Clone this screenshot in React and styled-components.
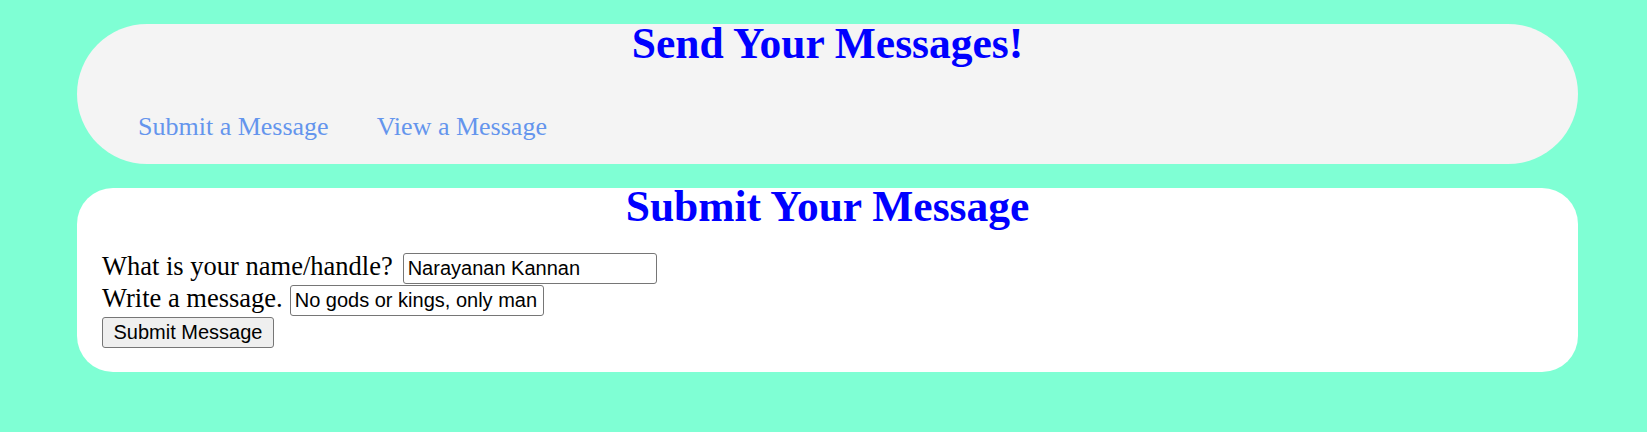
import React from "react"
import styled, { createGlobalStyle } from "styled-components"

const GlobalStyle = createGlobalStyle`
    html, body {
        margin: 0;
        padding: 0;
        background: #7fffd4;
    }
    body {
        font-family: "Liberation Serif", "Times New Roman", serif;
        color: #000;
    }
`;

const Page = styled.div`
    min-height: 100vh;
    box-sizing: border-box;
    padding: 24px 0 0 77px;
    display: flex;
    flex-direction: column;
    gap: 24px;
`;

const Header = styled.header`
    width: 1501px;
    height: 140px;
    box-sizing: border-box;
    padding-top: 1.5px;
    background: #f4f4f4;
    border-radius: 70px;
    display: flex;
    flex-direction: column;
`;

const Title = styled.h1`
    margin: 0;
    font-size: 43.5px;
    line-height: 34px;
    font-weight: 700;
    text-align: center;
    color: #0000ff;
`;

const Nav = styled.nav`
    margin-top: 52px;
    padding-left: 61px;
    display: flex;
    gap: 48px;
`;

const NavLink = styled.a`
    font-size: 26px;
    line-height: 29px;
    color: #6495ed;
    text-decoration: none;
    cursor: pointer;
`;

const Card = styled.section`
    width: 1501px;
    box-sizing: border-box;
    padding: 0.5px 25px 24px;
    background: #fff;
    border-radius: 36px;
`;

const Form = styled.form`
    margin-top: 30.5px;
    display: flex;
    flex-direction: column;
    align-items: flex-start;
    gap: 1px;
`;

const Field = styled.div`
    display: flex;
    align-items: baseline;
    gap: ${({ $space }) => $space}px;
`;

const Label = styled.label`
    font-size: 26.5px;
    line-height: 26px;
`;

const TextInput = styled.input`
    width: 254px;
    height: 31px;
    box-sizing: border-box;
    padding: 0 4px;
    border: 1px solid #767676;
    border-radius: 3px;
    background: #fff;
    font-family: "Liberation Sans", Arial, sans-serif;
    font-size: 20px;
    color: #000;
    outline: none;
`;

const Button = styled.button`
    width: 172px;
    height: 31px;
    box-sizing: border-box;
    padding: 0;
    border: 1px solid #767676;
    border-radius: 3px;
    background: #efefef;
    font-family: "Liberation Sans", Arial, sans-serif;
    font-size: 20px;
    color: #000;
    cursor: pointer;
`;

const App = () => {
    return (
        <>
            <GlobalStyle />
            <Page>
                <Header>
                    <Title>Send Your Messages!</Title>
                    <Nav>
                        <NavLink>Submit a Message</NavLink>
                        <NavLink>View a Message</NavLink>
                    </Nav>
                </Header>
                <Card>
                    <Title>Submit Your Message</Title>
                    <Form onSubmit={(e) => e.preventDefault()}>
                        <Field $space={10}>
                            <Label htmlFor="handle">What is your name/handle?</Label>
                            <TextInput id="handle" type="text" defaultValue="Narayanan Kannan" />
                        </Field>
                        <Field $space={7}>
                            <Label htmlFor="message">Write a message.</Label>
                            <TextInput id="message" type="text" defaultValue="No gods or kings, only man" />
                        </Field>
                        <Button type="submit">Submit Message</Button>
                    </Form>
                </Card>
            </Page>
        </>
    )
}

export default App
